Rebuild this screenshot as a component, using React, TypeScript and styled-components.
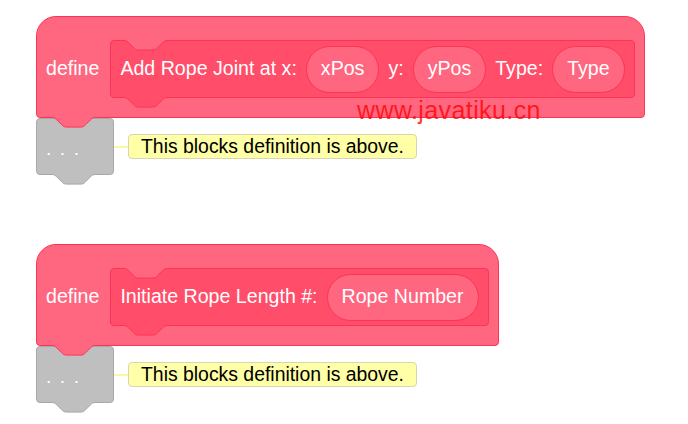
import React from "react";
import styled, { createGlobalStyle } from "styled-components";

const GlobalStyle = createGlobalStyle`
  html, body { margin: 0; padding: 0; background: #ffffff; }
  body { font-family: "Liberation Sans", Arial, Helvetica, sans-serif; }
  #root { width: 688px; height: 424px; overflow: hidden; }
`;

const HAT = "#FF6680";
const PROTO = "#FF4D6A";
const STROKE = "#FF3355";
const GRAY = "#BFBFBF";
const GRAY_STROKE = "#A8A8A8";

const NOTCH =
  "c 2.4,0 3.6,1.2 4.8,2.4 l 4.8,4.8 c 1.2,1.2 2.4,2.4 4.8,2.4 h 14.4 c 2.4,0 3.6,-1.2 4.8,-2.4 l 4.8,-4.8 c 1.2,-1.2 2.4,-2.4 4.8,-2.4";

const Page = styled.div`
  position: relative;
  width: 688px;
  height: 424px;
  box-sizing: border-box;
  padding: 16px 0 0 36px;
  display: flex;
  flex-direction: column;
  gap: 69px;
`;

const Stack = styled.div`
  display: flex;
  flex-direction: column;
  align-items: flex-start;
`;

const Hat = styled.div`
  position: relative;
  z-index: 1;
  display: flex;
  align-items: center;
  gap: 11px;
  padding: 23px 9px 19px 9px;
  background: ${HAT};
  border: 1px solid ${STROKE};
  border-radius: 20px 20px 4px 4px;
  color: #ffffff;
  font-size: 19.6px;
`;

const Label = styled.span`
  white-space: nowrap;
  line-height: 1;
`;

const Prototype = styled.div`
  position: relative;
  display: flex;
  align-items: center;
  gap: 9px;
  height: 58px;
  box-sizing: border-box;
  padding: 0 9px;
  background: ${PROTO};
  border: 1px solid ${STROKE};
  border-radius: 4px;
`;

const Pill = styled.span`
  display: inline-flex;
  align-items: center;
  height: 47px;
  box-sizing: border-box;
  padding: 0 14px;
  border-radius: 24px;
  background: ${HAT};
  border: 1px solid ${STROKE};
  white-space: nowrap;
  line-height: 1;
`;

const TopNotchSvg = styled.svg<{ $left: number }>`
  position: absolute;
  top: -1px;
  left: ${(p) => p.$left}px;
  overflow: visible;
`;

const BottomBumpSvg = styled.svg<{ $left: number }>`
  position: absolute;
  bottom: -11px;
  left: ${(p) => p.$left}px;
  overflow: visible;
`;

const Row = styled.div`
  display: flex;
  align-items: center;
`;

const GrayBlock = styled.div`
  position: relative;
  width: 78px;
  height: 57px;
  box-sizing: border-box;
  padding-left: 9px;
  padding-top: 4px;
  display: flex;
  align-items: center;
  background: ${GRAY};
  border: 1px solid ${GRAY_STROKE};
  border-radius: 4px;
  color: #ffffff;
  font-size: 19.2px;
  letter-spacing: 1.6px;
  line-height: 1;
`;

const Connector = styled.div`
  width: 14px;
  height: 2px;
  background: #fff59a;
`;

const Comment = styled.div`
  height: 25px;
  box-sizing: border-box;
  padding: 0 12px;
  display: flex;
  align-items: center;
  background: #ffffa8;
  border: 1px solid #d6d6b0;
  border-radius: 4px;
  color: #000000;
  font-size: 19.4px;
  white-space: nowrap;
  line-height: 1;
`;

const Watermark = styled.div`
  position: absolute;
  left: 357px;
  top: 98px;
  z-index: 5;
  font-size: 25px;
  line-height: 25px;
  letter-spacing: 0.4px;
  color: rgba(255, 0, 0, 0.78);
  font-weight: 300;
  pointer-events: none;
`;

const TopNotch: React.FC<{ left: number; outer: string; stroke: string }> = ({ left, outer, stroke }) => (
  <TopNotchSvg $left={left} width="44" height="11" viewBox="0 0 44 11">
    <path d={`M0,0 V0.5 ${NOTCH} V0 Z`} fill={outer} />
    <path d={`M0,0.5 ${NOTCH}`} fill="none" stroke={stroke} strokeWidth="1" />
  </TopNotchSvg>
);

const BottomBump: React.FC<{ left: number; fill: string; stroke: string }> = ({ left, fill, stroke }) => (
  <BottomBumpSvg $left={left} width="44" height="12" viewBox="0 0 44 12">
    <path d={`M0,0 V1.5 ${NOTCH} V0 Z`} fill={fill} />
    <path d={`M0,1.5 ${NOTCH}`} fill="none" stroke={stroke} strokeWidth="1" />
  </BottomBumpSvg>
);

type Part = { kind: "text" | "arg"; value: string };

const DefineBlock: React.FC<{ parts: Part[] }> = ({ parts }) => (
  <Stack>
    <Hat>
      <Label>define</Label>
      <Prototype>
        <TopNotch left={13} outer={HAT} stroke={STROKE} />
        {parts.map((p, i) =>
          p.kind === "text" ? <Label key={i}>{p.value}</Label> : <Pill key={i}>{p.value}</Pill>
        )}
        <BottomBump left={13} fill={PROTO} stroke={STROKE} />
      </Prototype>
      <BottomBump left={15} fill={HAT} stroke={STROKE} />
    </Hat>
    <Row>
      <GrayBlock>
        . . .
        <BottomBump left={15} fill={GRAY} stroke={GRAY_STROKE} />
      </GrayBlock>
      <Connector />
      <Comment>This blocks definition is above.</Comment>
    </Row>
  </Stack>
);

export default function App() {
  return (
    <>
      <GlobalStyle />
      <Page>
        <DefineBlock
          parts={[
            { kind: "text", value: "Add Rope Joint at x:" },
            { kind: "arg", value: "xPos" },
            { kind: "text", value: "y:" },
            { kind: "arg", value: "yPos" },
            { kind: "text", value: "Type:" },
            { kind: "arg", value: "Type" },
          ]}
        />
        <DefineBlock
          parts={[
            { kind: "text", value: "Initiate Rope Length #:" },
            { kind: "arg", value: "Rope Number" },
          ]}
        />
        <Watermark>www.javatiku.cn</Watermark>
      </Page>
    </>
  );
}
